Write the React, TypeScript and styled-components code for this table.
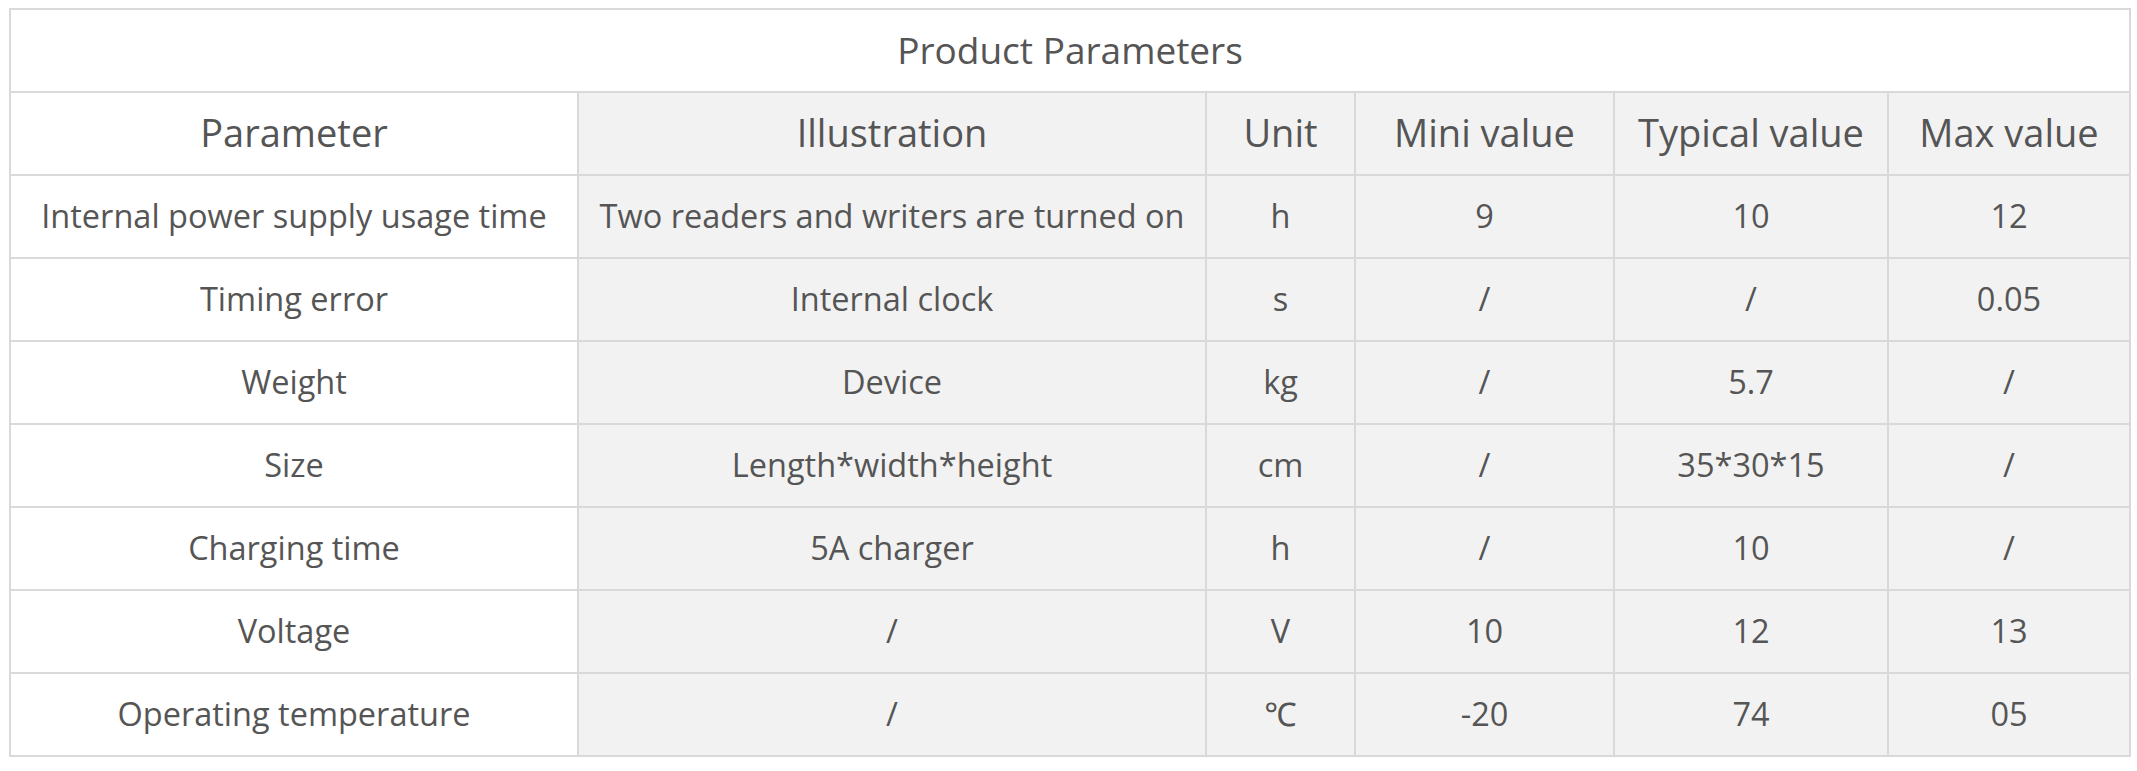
import React from "react";
import styled, { createGlobalStyle } from "styled-components";

const Global = createGlobalStyle`
  html, body { margin: 0; padding: 0; background: #ffffff; }
  body { font-family: "Open Sans", "Noto Sans", sans-serif; color: #555555; }
`;

const Page = styled.div`
  padding: 8px 8px 0 9px;
`;

const Table = styled.table`
  width: 2120px;
  border-collapse: collapse;
  table-layout: fixed;
  border: 2px solid #d9d9d9;
`;

const TitleCell = styled.th`
  box-sizing: border-box;
  height: 83px;
  padding: 0 0 2px;
  border: 2px solid #d9d9d9;
  background: #ffffff;
  font-weight: 400;
  font-size: 37px;
  color: #555555;
  text-align: center;
  white-space: nowrap;
`;

const HeadCell = styled.th<{ $light?: boolean }>`
  box-sizing: border-box;
  height: 83px;
  padding: 0 0 4px;
  border: 2px solid #d9d9d9;
  background: ${(p) => (p.$light ? "#ffffff" : "#f2f2f2")};
  font-weight: 400;
  font-size: 38px;
  color: #555555;
  text-align: center;
  white-space: nowrap;
`;

const Cell = styled.td<{ $light?: boolean }>`
  box-sizing: border-box;
  height: 83px;
  padding: 0 0 2px;
  border: 2px solid #d9d9d9;
  background: ${(p) => (p.$light ? "#ffffff" : "#f2f2f2")};
  font-size: 32.5px;
  color: #555555;
  text-align: center;
  white-space: nowrap;
`;

const widths = [568, 628, 149, 259, 274, 242];
const headers = ["Parameter", "Illustration", "Unit", "Mini value", "Typical value", "Max value"];
const rows: string[][] = [
  ["Internal power supply usage time", "Two readers and writers are turned on", "h", "9", "10", "12"],
  ["Timing error", "Internal clock", "s", "/", "/", "0.05"],
  ["Weight", "Device", "kg", "/", "5.7", "/"],
  ["Size", "Length*width*height", "cm", "/", "35*30*15", "/"],
  ["Charging time", "5A charger", "h", "/", "10", "/"],
  ["Voltage", "/", "V", "10", "12", "13"],
  ["Operating temperature", "/", "℃", "-20", "74", "05"],
];

export default function App() {
  return (
    <Page>
      <Global />
      <Table>
        <colgroup>
          {widths.map((w, i) => (
            <col key={i} style={{ width: w }} />
          ))}
        </colgroup>
        <thead>
          <tr>
            <TitleCell colSpan={6}>Product Parameters</TitleCell>
          </tr>
          <tr>
            {headers.map((h, i) => (
              <HeadCell key={h} $light={i === 0}>
                {h}
              </HeadCell>
            ))}
          </tr>
        </thead>
        <tbody>
          {rows.map((r, ri) => (
            <tr key={ri}>
              {r.map((c, ci) => (
                <Cell key={ci} $light={ci === 0}>
                  {c}
                </Cell>
              ))}
            </tr>
          ))}
        </tbody>
      </Table>
    </Page>
  );
}
